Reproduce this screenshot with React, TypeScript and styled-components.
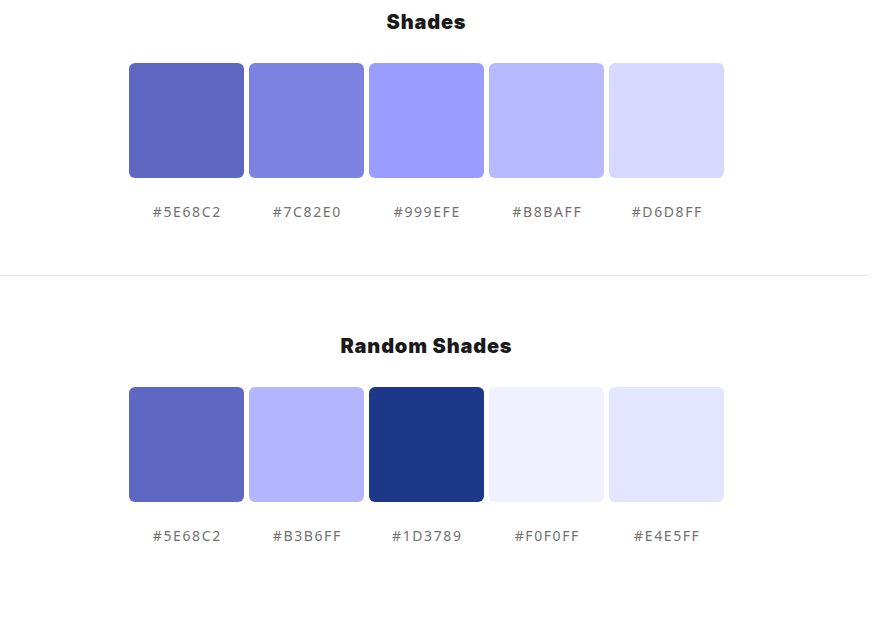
import React, { FC } from 'react';
import styled, { createGlobalStyle } from 'styled-components';

const GlobalStyle = createGlobalStyle`
  body {
    margin: 0;
    background: #ffffff;
    font-family: Inter, "Noto Sans", sans-serif;
  }
`;

interface PaletteProps {
  title: string;
  colors: string[];
  first?: boolean;
}

const Page = styled.div`
  width: 853px;
`;

const Section = styled.section<{ first?: boolean }>`
  display: flex;
  flex-direction: column;
  align-items: center;
  padding-top: ${props => (props.first ? '10px' : '58px')};
  padding-bottom: 55px;
`;

const Title = styled.h2`
  margin: 0;
  font-size: 20px;
  line-height: 24px;
  font-weight: 900;
  color: #1a1a1a;
  letter-spacing: 0.8px;
`;

const SwatchRow = styled.ul`
  display: flex;
  gap: 5px;
  margin: 29px 0 0;
  padding: 0;
  list-style-type: none;
`;

const SwatchItem = styled.li`
  display: flex;
  flex-direction: column;
  align-items: center;
  width: 115px;
`;

const Swatch = styled.div<{ color: string }>`
  width: 115px;
  height: 115px;
  border-radius: 6px;
  background: ${props => props.color};
`;

const HexLabel = styled.span`
  margin-top: 26px;
  padding-left: 1.6px;
  font-family: "Noto Sans", sans-serif;
  font-size: 14px;
  line-height: 16px;
  letter-spacing: 1.6px;
  color: #707070;
`;

const Divider = styled.hr`
  width: 868px;
  margin: 0;
  border: none;
  border-top: 1px solid #e6e6e6;
`;

const Palette: FC<PaletteProps> = ({ title, colors, first }) => (
  <Section first={first}>
    <Title>{title}</Title>
    <SwatchRow>
      {colors.map((color, index) => (
        <SwatchItem key={index}>
          <Swatch color={color} />
          <HexLabel>{color}</HexLabel>
        </SwatchItem>
      ))}
    </SwatchRow>
  </Section>
);

const shades = ['#5E68C2', '#7C82E0', '#999EFE', '#B8BAFF', '#D6D8FF'];
const randomShades = ['#5E68C2', '#B3B6FF', '#1D3789', '#F0F0FF', '#E4E5FF'];

const App: FC = () => (
  <>
    <GlobalStyle />
    <Page>
      <Palette title="Shades" colors={shades} first />
    </Page>
    <Divider />
    <Page>
      <Palette title="Random Shades" colors={randomShades} />
    </Page>
  </>
);

export default App;
